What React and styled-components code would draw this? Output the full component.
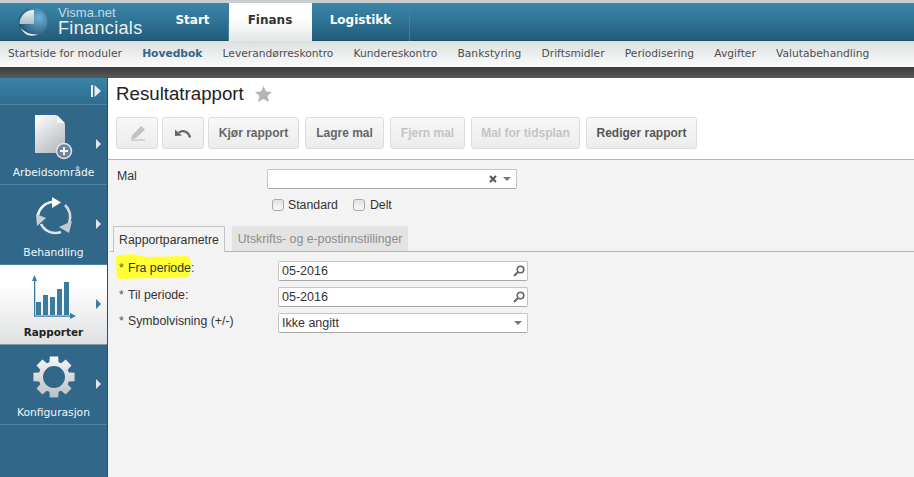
import React from "react"
import styled, { createGlobalStyle } from "styled-components"

const GlobalStyle = createGlobalStyle`
  html, body {
    margin: 0;
    height: 100%;
    overflow: hidden;
    background: #f3f3f3;
  }
  * {
    box-sizing: border-box;
  }
`

const Page = styled.div`
  width: 914px;
  height: 477px;
  display: flex;
  flex-direction: column;
  overflow: hidden;
  font-family: "Liberation Sans", Arial, sans-serif;
`

const Header = styled.header`
  height: 41px;
  flex: none;
  display: flex;
  border-top: 3px solid #c9ced1;
  border-bottom: 1px solid #1f4d63;
  background: linear-gradient(#3b86a9, #2f7596 45%, #245c7a);
`

const Logo = styled.div`
  width: 157px;
  flex: none;
  display: flex;
  align-items: center;
  padding-left: 17px;
  gap: 9px;
`

const LogoText = styled.div`
  display: flex;
  flex-direction: column;
  padding-top: 2px;
  color: #e9f1f5;
`

const LogoSmall = styled.span`
  font-size: 13px;
  line-height: 12px;
  color: #c5d9e3;
`

const LogoBig = styled.span`
  font-size: 18px;
  line-height: 19px;
  letter-spacing: 0.35px;
`

const MainTab = styled.div`
  height: 38px;
  width: ${(p) => p.$width}px;
  flex: none;
  display: flex;
  align-items: center;
  justify-content: center;
  font-family: "DejaVu Sans", Verdana, sans-serif;
  font-size: 12px;
  font-weight: 700;
  padding-bottom: 4px;
  color: ${(p) => (p.$active ? "#333" : "#fff")};
  background: ${(p) =>
    p.$active ? "linear-gradient(#fff 40%, #e4e6e7)" : "transparent"};
  border-right: 1px solid ${(p) => (p.$active ? "transparent" : "#3f809f")};
`

const SubMenu = styled.nav`
  height: 26px;
  flex: none;
  display: flex;
  align-items: center;
  gap: 20.2px;
  padding: 0 0 1px 8px;
  background: linear-gradient(#dcdfe0, #fbfbfb);
  font-family: "DejaVu Sans", Verdana, sans-serif;
  font-size: 10.7px;
  color: #4c4f52;
`

const SubItem = styled.span`
  font-weight: ${(p) => (p.$active ? 700 : 400)};
  color: ${(p) => (p.$active ? "#35658a" : "inherit")};
`

const DarkBar = styled.div`
  height: 11px;
  flex: none;
  background: linear-gradient(#3c3c3c, #5a5a5a);
`

const Body = styled.div`
  flex: 1;
  display: flex;
  min-height: 0;
`

const Sidebar = styled.aside`
  width: 108px;
  flex: none;
  background: #31688a;
  border-right: 1px solid #24506b;
  display: flex;
  flex-direction: column;
`

const SideTop = styled.div`
  height: 27px;
  display: flex;
  align-items: center;
  justify-content: flex-end;
  padding-right: 6px;
  background: linear-gradient(#3a82a6, #2f6d90);
  border-bottom: 1px solid #4f83a1;
`

const SideItem = styled.div`
  position: relative;
  height: 80px;
  flex: none;
  display: flex;
  flex-direction: column;
  align-items: center;
  font-family: "DejaVu Sans", Verdana, sans-serif;
  font-size: ${(p) => (p.$active ? 10.4 : 10.7)}px;
  font-weight: ${(p) => (p.$active ? 700 : 400)};
  color: ${(p) => (p.$active ? "#222" : "#f2f6f8")};
  background: ${(p) =>
    p.$active ? "linear-gradient(#fff 25%, #dfe0e1)" : "transparent"};
  border-bottom: 1px solid ${(p) => (p.$active ? "#8a9aa5" : "#4f83a1")};
`

const SideIcon = styled.div`
  height: 61px;
  width: 100%;
  display: flex;
  align-items: center;
  justify-content: center;
  padding-top: 2px;
`

const SideArrow = styled.span`
  position: absolute;
  right: 6px;
  top: 34px;
  width: 0;
  height: 0;
  border-style: solid;
  border-width: 5px 0 5px 5px;
  border-color: transparent transparent transparent
    ${(p) => (p.$active ? "#3a7ca0" : "#dfe8ee")};
`

const Main = styled.main`
  flex: 1;
  display: flex;
  flex-direction: column;
  min-width: 0;
`

const TopPanel = styled.div`
  height: 82px;
  flex: none;
  background: #fff;
  border-bottom: 1px solid #b5b5b5;
  padding: 4px 0 0 8px;
`

const TitleRow = styled.div`
  height: 24px;
  display: flex;
  align-items: center;
  gap: 11px;
`

const Title = styled.h1`
  margin: 0;
  font-size: 18.7px;
  font-weight: 400;
  color: #222;
`

const Toolbar = styled.div`
  display: flex;
  margin-top: 11px;
`

const ToolButton = styled.button`
  height: 32px;
  width: ${(p) => p.$width}px;
  margin-right: ${(p) => p.$gap}px;
  padding: 0;
  display: flex;
  align-items: center;
  justify-content: center;
  border: 1px solid #dcdcdc;
  border-radius: 3px;
  background: linear-gradient(#f8f8f8, #ececec);
  font-family: "Liberation Sans", Arial, sans-serif;
  font-size: 12px;
  font-weight: 700;
  color: ${(p) => p.$color || "#666"};
`

const FormPanel = styled.div`
  flex: 1;
  background: #f3f3f3;
  border-left: 2px solid #eaf4fb;
  font-size: 12.3px;
  color: #333;
`

const TemplateRow = styled.div`
  height: 30px;
  display: flex;
  padding: 9px 0 0 7px;
`

const TemplateLabel = styled.span`
  width: 150px;
  flex: none;
  line-height: 14px;
`

const Field = styled.div`
  height: 20px;
  width: 250px;
  flex: none;
  display: flex;
  align-items: center;
  justify-content: space-between;
  padding: 0 2px 0 3px;
  background: #fff;
  border: 1px solid #c4c4c4;
  border-bottom-color: #a8a8a8;
  border-radius: 2px;
  font-size: 12.5px;
  color: #333;
`

const FieldIcons = styled.span`
  display: flex;
  align-items: center;
  gap: 6px;
`

const DownCaret = styled.span`
  width: 0;
  height: 0;
  margin-right: 3px;
  border-style: solid;
  border-width: 4px 4px 0;
  border-color: #777 transparent transparent;
`

const CheckRow = styled.div`
  height: 27px;
  display: flex;
  align-items: center;
  padding: 2px 0 0 162px;
`

const CheckBox = styled.span`
  width: 12px;
  height: 12px;
  flex: none;
  margin-right: ${(p) => p.$gap || 4}px;
  border: 1px solid #a9a9a9;
  border-radius: 3px;
  background: linear-gradient(#e2e2e2, #fafafa);
`

const CheckLabel = styled.span`
  margin-right: ${(p) => p.$gap || 0}px;
`

const Tabs = styled.div`
  height: 35px;
  display: flex;
  align-items: flex-end;
  padding-left: 3px;
  gap: 7px;
  border-bottom: 1px solid #b5b5b5;
`

const Tab = styled.div`
  height: ${(p) => (p.$active ? 26 : 25)}px;
  width: ${(p) => p.$width}px;
  display: flex;
  align-items: center;
  justify-content: center;
  margin-bottom: ${(p) => (p.$active ? -1 : 0)}px;
  background: ${(p) => (p.$active ? "#f3f3f3" : "#e3e3e3")};
  border: ${(p) => (p.$active ? "1px solid #c4c4c4" : "none")};
  border-bottom: none;
  color: ${(p) => (p.$active ? "#333" : "#8d8d8d")};
`

const ParamList = styled.div`
  padding-top: 9px;
  display: flex;
  flex-direction: column;
  gap: 6px;
`

const ParamRow = styled.div`
  display: flex;
  align-items: flex-start;
  padding-left: 9px;
`

const ParamLabel = styled.span`
  position: relative;
  width: 159px;
  flex: none;
  line-height: 14px;
  padding-top: ${(p) => p.$top || 0}px;
`

const Required = styled.span`
  display: inline-block;
  width: 9px;
  color: #555;
`

const Marker = styled.svg`
  position: absolute;
  left: -3px;
  top: -7px;
`

const LabelText = styled.span`
  position: relative;
`

const LogoMark = () => (
  <svg width="32" height="32" viewBox="0 0 32 32">
    <defs>
      <radialGradient id="orb" cx="0.7" cy="0.35" r="0.8">
        <stop offset="0" stopColor="#6fb2d6" />
        <stop offset="1" stopColor="#174a68" />
      </radialGradient>
      <linearGradient id="orbLight" x1="0" y1="0" x2="0" y2="1">
        <stop offset="0" stopColor="#eef4f7" />
        <stop offset="1" stopColor="#a9bfcb" />
      </linearGradient>
    </defs>
    <circle cx="16" cy="16" r="14.5" fill="url(#orb)" />
    <path d="M17 4 A14 14 0 0 0 2.5 18 L17 18 Z" fill="url(#orbLight)" />
    <path d="M3 21 Q9 29 21 28.5 Q9 33 3 21 Z" fill="#e6edf0" />
  </svg>
)

const CollapseIcon = () => (
  <svg width="10" height="12" viewBox="0 0 10 12">
    <rect x="0" y="0" width="2" height="12" fill="#e8eef2" />
    <path d="M3.5 0 L10 6 L3.5 12 Z" fill="#e8eef2" />
  </svg>
)

const DocIcon = () => (
  <svg width="40" height="46" viewBox="0 0 40 46">
    <defs>
      <linearGradient id="doc" x1="0" y1="0" x2="0.6" y2="1">
        <stop offset="0" stopColor="#fff" />
        <stop offset="1" stopColor="#b9bfc2" />
      </linearGradient>
    </defs>
    <path d="M1 1 H22 L31 10 V39 H1 Z" fill="url(#doc)" />
    <path d="M23 1 L31 9 H23 Z" fill="#f4f6f7" />
    <circle cx="30" cy="37" r="7.5" fill="#6f8796" stroke="#dfe5e8" strokeWidth="1.5" />
    <path d="M30 33 V41 M26 37 H34" stroke="#f2f4f5" strokeWidth="2" />
  </svg>
)

const CycleIcon = () => (
  <svg width="40" height="40" viewBox="0 0 40 40">
    <g fill="none" strokeWidth="2.6">
      <path d="M4 18 A16 16 0 0 1 19 5" stroke="#f4f6f7" />
      <path d="M31 8 A16 16 0 0 1 35 26" stroke="#d5dadd" />
      <path d="M27 35 A16 16 0 0 1 7 27" stroke="#e2e6e8" />
    </g>
    <path d="M18 0 L27 5.5 L18 11 Z" fill="#fff" />
    <path d="M38 24 L35 36 L25 30 Z" fill="#c4cbcf" />
    <path d="M2 17 L12 21 L3 29 Z" fill="#c9d0d4" />
  </svg>
)

const ChartIcon = () => (
  <svg width="45" height="44" viewBox="0 1 45 44">
    <g fill="#3a7ca0">
      <path d="M1 7 L3.5 1 L6 7 H4.3 V41.5 H39 V39 L45 42 L39 45 V42.7 H3 V7 Z" />
      <rect x="5" y="28" width="5" height="13" />
      <rect x="12" y="21" width="5" height="20" />
      <rect x="19" y="23" width="5" height="18" />
      <rect x="26" y="15" width="5" height="26" />
      <rect x="33" y="8" width="5" height="33" />
    </g>
  </svg>
)

// 8 teeth, drawn from the centre so they stay evenly spaced
const gearPath = () => {
  const point = (r, a) =>
    `${(22 + r * Math.sin(a)).toFixed(2)} ${(22 - r * Math.cos(a)).toFixed(2)}`
  const parts = []
  for (let i = 0; i < 8; i++) {
    const a = (i * Math.PI) / 4
    parts.push(point(15.5, a - 0.3), point(21, a - 0.2), point(21, a + 0.2), point(15.5, a + 0.3))
  }
  return `M${parts.join(" L")} Z M22 11 A11 11 0 1 0 22.01 33 A11 11 0 1 0 22 11 Z`
}

const GearIcon = () => (
  <svg width="44" height="44" viewBox="0 0 44 44">
    <defs>
      <linearGradient id="gear" x1="0" y1="0" x2="0" y2="1">
        <stop offset="0" stopColor="#f6f6f6" />
        <stop offset="1" stopColor="#b9c0c4" />
      </linearGradient>
    </defs>
    <path fill="url(#gear)" fillRule="evenodd" d={gearPath()} />
  </svg>
)

const StarIcon = () => (
  <svg width="17" height="16" viewBox="0 0 17 16">
    <path d="M8.5 0 L11 5.5 L17 6 L12.5 10 L14 16 L8.5 13 L3 16 L4.5 10 L0 6 L6 5.5 Z" fill="#b5b5b5" />
  </svg>
)

const PencilIcon = () => (
  <svg width="15" height="15" viewBox="0 0 15 15">
    <path d="M11 0 L15 3.5 L6 12 L1 13.5 L2.5 9 Z" fill="#c2c2c2" />
    <rect x="1" y="13.5" width="14" height="1.2" fill="#c2c2c2" />
  </svg>
)

const UndoIcon = () => (
  <svg width="16" height="10" viewBox="0 0 16 10">
    <path d="M15 9.5 C14 4 8 1.5 4 4.5" fill="none" stroke="#666" strokeWidth="2.2" />
    <path d="M0 1.5 L7 7.5 L0 8 Z" fill="#666" />
  </svg>
)

const SearchIcon = () => (
  <svg width="12" height="12" viewBox="0 0 12 12">
    <circle cx="7.5" cy="4.5" r="3.3" fill="none" stroke="#666" strokeWidth="1.6" />
    <path d="M5 7 L1 11" stroke="#666" strokeWidth="2" />
  </svg>
)

const ClearIcon = () => (
  <svg width="8" height="8" viewBox="0 0 8 8">
    <path d="M1 1 L7 7 M7 1 L1 7" stroke="#555" strokeWidth="2" />
  </svg>
)

const subItems = [
  "Startside for moduler",
  "Hovedbok",
  "Leverandørreskontro",
  "Kundereskontro",
  "Bankstyring",
  "Driftsmidler",
  "Periodisering",
  "Avgifter",
  "Valutabehandling",
]

const App = () => (
  <Page>
    <GlobalStyle />
    <Header>
      <Logo>
        <LogoMark />
        <LogoText>
          <LogoSmall>Visma.net</LogoSmall>
          <LogoBig>Financials</LogoBig>
        </LogoText>
      </Logo>
      <MainTab $width={72}>Start</MainTab>
      <MainTab $width={83} $active>
        Finans
      </MainTab>
      <MainTab $width={98}>Logistikk</MainTab>
    </Header>
    <SubMenu>
      {subItems.map((item) => (
        <SubItem key={item} $active={item === "Hovedbok"}>
          {item}
        </SubItem>
      ))}
    </SubMenu>
    <DarkBar />
    <Body>
      <Sidebar>
        <SideTop>
          <CollapseIcon />
        </SideTop>
        <SideItem>
          <SideIcon>
            <DocIcon />
          </SideIcon>
          Arbeidsområde
          <SideArrow />
        </SideItem>
        <SideItem>
          <SideIcon>
            <CycleIcon />
          </SideIcon>
          Behandling
          <SideArrow />
        </SideItem>
        <SideItem $active>
          <SideIcon>
            <ChartIcon />
          </SideIcon>
          Rapporter
          <SideArrow $active />
        </SideItem>
        <SideItem>
          <SideIcon>
            <GearIcon />
          </SideIcon>
          Konfigurasjon
          <SideArrow />
        </SideItem>
      </Sidebar>
      <Main>
        <TopPanel>
          <TitleRow>
            <Title>Resultatrapport</Title>
            <StarIcon />
          </TitleRow>
          <Toolbar>
            <ToolButton $width={42} $gap={4}>
              <PencilIcon />
            </ToolButton>
            <ToolButton $width={42} $gap={4}>
              <UndoIcon />
            </ToolButton>
            <ToolButton $width={91} $gap={6}>
              Kjør rapport
            </ToolButton>
            <ToolButton $width={79} $gap={6}>
              Lagre mal
            </ToolButton>
            <ToolButton $width={75} $gap={6} $color="#c4c4c4">
              Fjern mal
            </ToolButton>
            <ToolButton $width={109} $gap={6} $color="#c4c4c4">
              Mal for tidsplan
            </ToolButton>
            <ToolButton $width={111} $gap={0} $color="#555">
              Rediger rapport
            </ToolButton>
          </Toolbar>
        </TopPanel>
        <FormPanel>
          <TemplateRow>
            <TemplateLabel>Mal</TemplateLabel>
            <Field>
              <span />
              <FieldIcons>
                <ClearIcon />
                <DownCaret />
              </FieldIcons>
            </Field>
          </TemplateRow>
          <CheckRow>
            <CheckBox />
            <CheckLabel $gap={15}>Standard</CheckLabel>
            <CheckBox $gap={5} />
            <CheckLabel>Delt</CheckLabel>
          </CheckRow>
          <Tabs>
            <Tab $active $width={112}>
              Rapportparametre
            </Tab>
            <Tab $width={176}>Utskrifts- og e-postinnstillinger</Tab>
          </Tabs>
          <ParamList>
            <ParamRow>
              <ParamLabel>
                <Marker width="75" height="26" viewBox="0 0 75 26">
                  <path
                    d="M0 2 L14 0 L32 3 L70 2 Q75 3 75 9 L74 22 Q62 25 40 24 L1 25 Z"
                    fill="#ffff33"
                  />
                </Marker>
                <LabelText>
                  <Required>*</Required>Fra periode:
                </LabelText>
              </ParamLabel>
              <Field>
                05-2016
                <SearchIcon />
              </Field>
            </ParamRow>
            <ParamRow>
              <ParamLabel $top={1}>
                <Required>*</Required>Til periode:
              </ParamLabel>
              <Field>
                05-2016
                <SearchIcon />
              </Field>
            </ParamRow>
            <ParamRow>
              <ParamLabel $top={1}>
                <Required>*</Required>Symbolvisning (+/-)
              </ParamLabel>
              <Field>
                Ikke angitt
                <DownCaret />
              </Field>
            </ParamRow>
          </ParamList>
        </FormPanel>
      </Main>
    </Body>
  </Page>
)

export default App
